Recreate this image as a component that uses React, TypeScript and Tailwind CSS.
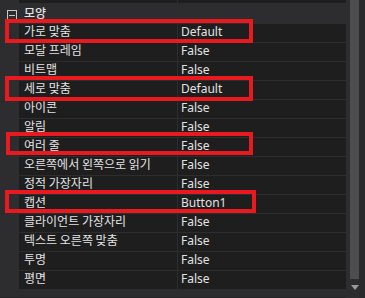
import React from "react";

const rows: [string, string][] = [
  ["가로 맞춤", "Default"],
  ["모달 프레임", "False"],
  ["비트맵", "False"],
  ["세로 맞춤", "Default"],
  ["아이콘", "False"],
  ["알림", "False"],
  ["여러 줄", "False"],
  ["오른쪽에서 왼쪽으로 읽기", "False"],
  ["정적 가장자리", "False"],
  ["캡션", "Button1"],
  ["클라이언트 가장자리", "False"],
  ["텍스트 오른쪽 맞춤", "False"],
  ["투명", "False"],
  ["평면", "False"],
];

const boxes = [
  { top: 19, left: 5, width: 248, height: 24 },
  { top: 76, left: 5, width: 248, height: 25 },
  { top: 132, left: 6, width: 247, height: 23 },
  { top: 190, left: 5, width: 251, height: 23 },
];

const KR = { fontFamily: '"Noto Sans CJK KR", "Noto Sans", sans-serif' };

export default function App() {
  return (
    <div
      className="relative w-[365px] h-[298px] bg-[#2d2d30] overflow-hidden flex text-[12px] text-[#e2e2e2]"
      style={{ fontFamily: '"Noto Sans", "Noto Sans CJK KR", sans-serif' }}
    >
      <div className="w-[346px] flex flex-col">
        {/* partial row at top */}
        <div className="h-[4px] flex border-b border-[#2d2d30]">
          <div className="w-[19px] bg-[#2d2d30]" />
          <div className="w-[158px] bg-[#1e1e1e]" />
          <div className="w-[1px] bg-[#2d2d30]" />
          <div className="flex-1 bg-[#1e1e1e]" />
        </div>
        {/* header */}
        <div className="h-[20px] flex items-start bg-[#2d2d30]">
          <div className="w-[19px] flex pl-[7px] pt-[6px]">
            <div className="w-[10px] h-[10px] border border-[#c8c8c8] flex items-center justify-center">
              <div className="w-[6px] h-[1px] bg-[#c8c8c8]" />
            </div>
          </div>
          <span className="pl-[5px] leading-[18px] text-[12px] font-medium" style={KR}>
            모양
          </span>
        </div>
        {rows.map(([k, v]) => (
          <div key={k} className="h-[19px] flex border-b border-[#2d2d30]">
            <div className="w-[19px] bg-[#2d2d30]" />
            <div
              className="w-[158px] bg-[#1e1e1e] flex items-center pl-[5px] pb-[5px] whitespace-nowrap leading-none text-[12px]"
              style={KR}
            >
              {k}
            </div>
            <div className="w-[1px] bg-[#2d2d30]" />
            <div className="flex-1 bg-[#1e1e1e] flex items-center pl-[3px] pb-[3px] leading-none">
              {v}
            </div>
          </div>
        ))}
        <div className="flex-1 bg-[#2d2d30] border-b border-[#252526]" />
      </div>
      {/* scrollbar */}
      <div className="w-[19px] flex bg-[#2d2d30]">
        <div className="w-[4px]" />
        <div className="w-[9px] flex flex-col">
          <div className="h-[279px] bg-[#4d4d50]" />
          <div className="flex-1 flex justify-center pt-[6px]">
            <div className="w-0 h-0 border-l-[4px] border-r-[4px] border-t-[5px] border-l-transparent border-r-transparent border-t-[#9a9a9a]" />
          </div>
        </div>
        <div className="flex-1 bg-[#2a2a2c]" />
      </div>
      {boxes.map((b, i) => (
        <div
          key={i}
          className="absolute border-[4px] border-[#e8191f]"
          style={{ top: b.top, left: b.left, width: b.width, height: b.height }}
        />
      ))}
    </div>
  );
}
